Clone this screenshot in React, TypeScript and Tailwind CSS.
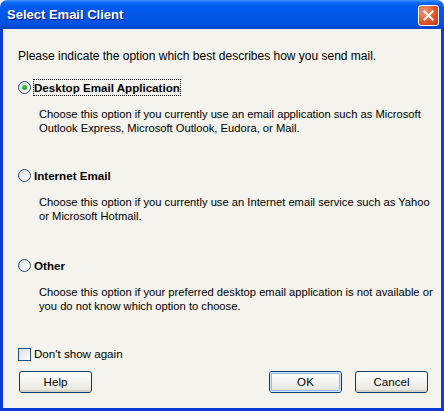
import React from "react";

function Radio({ checked }: { checked?: boolean }) {
  return (
    <span className="relative flex h-[13px] w-[13px] shrink-0 items-center justify-center rounded-full border border-[#1C5180] bg-gradient-to-br from-[#DCDCD7] to-[#FFFFFF]">
      {checked && (
        <span className="h-[5px] w-[5px] rounded-full bg-[radial-gradient(circle_at_40%_40%,#55D751,#21A121_60%,#1A7A1A)]" />
      )}
    </span>
  );
}

function Option({
  title,
  lines,
  checked,
  className,
}: {
  title: string;
  lines: string[];
  checked?: boolean;
  className?: string;
}) {
  return (
    <div className={className}>
      <div className="flex h-[17px] items-center">
        <Radio checked={checked} />
        <span
          className={
            "ml-[2px] flex h-[17px] items-center px-[1px] font-bold " +
            (checked ? "outline outline-1 outline-dotted outline-black -outline-offset-1" : "")
          }
        >
          {title}
        </span>
      </div>
      <div className="ml-[21px] mt-[11px] whitespace-nowrap text-[11.2px] leading-[14px]">
        {lines.map((l) => (
          <div key={l}>{l}</div>
        ))}
      </div>
    </div>
  );
}

function Btn({ label, def }: { label: string; def?: boolean }) {
  return (
    <button className="h-[22px] w-[73px] rounded-[3px] border border-[#003C74] bg-gradient-to-b from-[#FFFFFF] via-[#F4F4F0] to-[#E3E2DA] p-0 text-[11.6px] text-black">
      <span
        className={
          "flex h-full w-full items-center justify-center rounded-[2px] " +
          (def ? "shadow-[inset_0_0_0_1px_#CEE7FF,inset_0_0_0_2px_#98B8EA]" : "shadow-[inset_0_-2px_0_#D6D0C5]")
        }
      >
        {label}
      </span>
    </button>
  );
}

export default function App() {
  return (
    <div
      className="flex h-[411px] w-[444px] flex-col overflow-hidden text-[11.6px] text-black"
      style={{ fontFamily: '"Liberation Sans", Arial, sans-serif' }}
    >
      <div className="relative flex h-[29px] shrink-0 items-center rounded-t-[7px] bg-[linear-gradient(to_bottom,#3D95FF_0px,#0A66F2_3px,#0058EE_8px,#0055E5_18px,#0050DD_25px,#0041C4_29px)] pl-[7px]">
        <span
          className="text-[13px] font-bold text-white [text-shadow:1px_1px_0_#0A1883]"
          style={{ fontFamily: '"Liberation Sans", Arial, sans-serif' }}
        >
          Select Email Client
        </span>
        <div className="absolute right-[5px] top-[5px] flex h-[21px] w-[21px] items-center justify-center rounded-[3px] border border-white bg-[radial-gradient(circle_at_30%_30%,#F29A77,#E2542B_55%,#C13A17)]">
          <svg width="11" height="11" viewBox="0 0 11 11">
            <path d="M1.5 1.5 L9.5 9.5 M9.5 1.5 L1.5 9.5" stroke="white" strokeWidth="2" strokeLinecap="square" />
          </svg>
        </div>
      </div>
      <div className="flex min-h-0 flex-1 flex-col border-x-[3px] border-b-[3px] border-[#0A3BD6] bg-[#F4F3EE] pl-[15px] pr-[13px] pt-[20px]">
        <div className="h-[14px] whitespace-nowrap text-[12px] leading-[14px]">
          Please indicate the option which best describes how you send mail.
        </div>
        <Option
          className="mt-[16px]"
          checked
          title="Desktop Email Application"
          lines={[
            "Choose this option if you currently use an email application such as Microsoft",
            "Outlook Express, Microsoft Outlook, Eudora, or Mail.",
          ]}
        />
        <Option
          className="mt-[32px]"
          title="Internet Email"
          lines={[
            "Choose this option if you currently use an Internet email service such as Yahoo",
            "or Microsoft Hotmail.",
          ]}
        />
        <Option
          className="mt-[34px]"
          title="Other"
          lines={[
            "Choose this option if your preferred desktop email application is not available or",
            "you do not know which option to choose.",
          ]}
        />
        <div className="mt-[34px] flex h-[14px] items-center">
          <span className="h-[13px] w-[13px] shrink-0 border border-[#1C5180] bg-gradient-to-br from-[#DCDCD7] to-[#FFFFFF]" />
          <span className="ml-[3px]">Don&apos;t show again</span>
        </div>
        <div className="mt-[10px] flex items-center justify-between pl-[1px]">
          <Btn label="Help" />
          <div className="flex gap-[13px]">
            <Btn label="OK" def />
            <Btn label="Cancel" />
          </div>
        </div>
      </div>
    </div>
  );
}
